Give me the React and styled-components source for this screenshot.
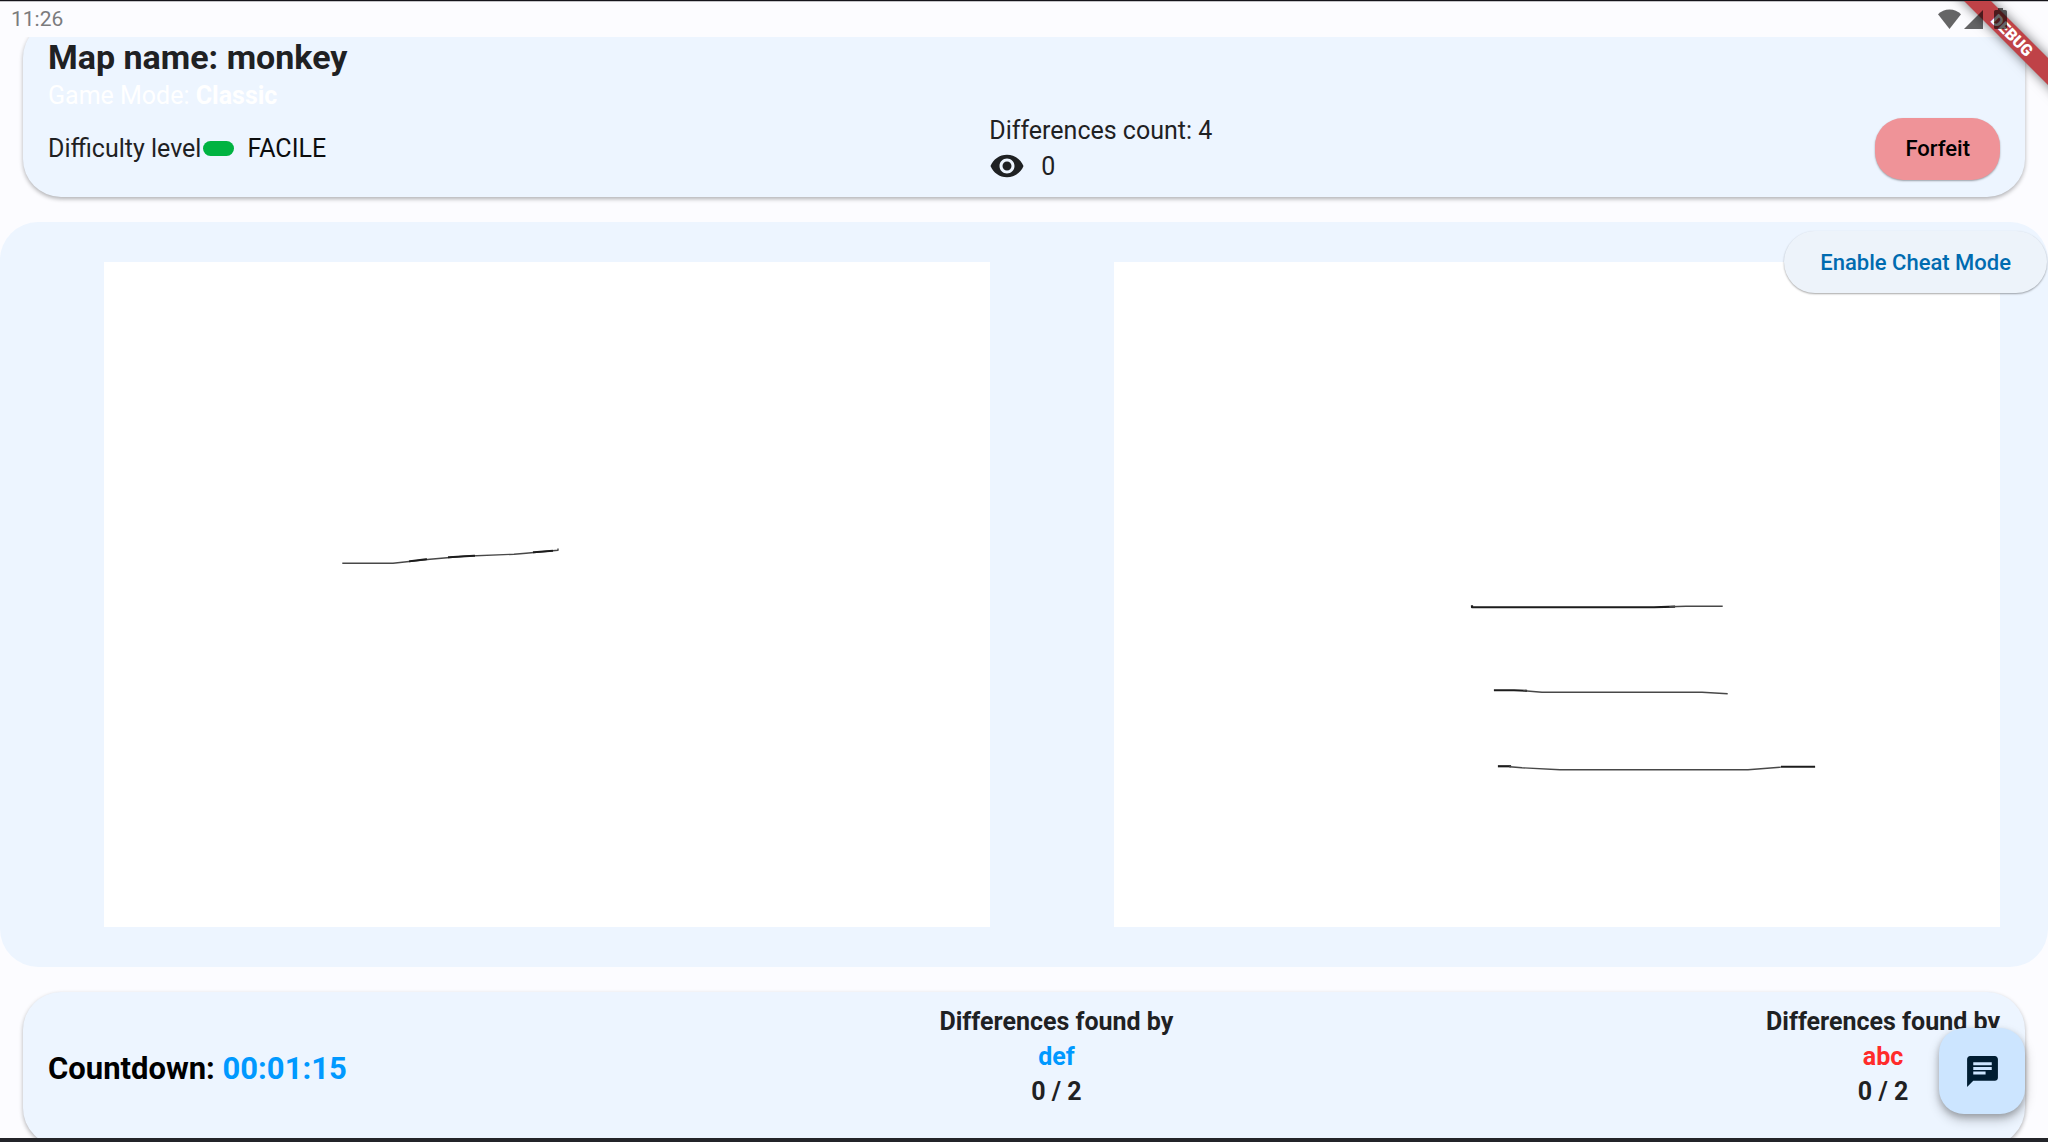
import React from "react";
import styled, { createGlobalStyle } from "styled-components";

const GlobalStyle = createGlobalStyle`
  *, *::before, *::after { box-sizing: border-box; }
  body {
    margin: 0;
    background: #fcfcff;
    color: #1f2123;
    font-family: Roboto, "Noto Sans", sans-serif;
    font-size: 25px;
  }
  h1, h2, p { margin: 0; }
`;

const Screen = styled.div`
  position: relative;
  display: flex;
  flex-direction: column;
  height: 100vh;
  overflow: hidden;
  border-top: 1px solid #15141a;
  border-bottom: 4px solid #232429;
  background: #fcfcff;
`;

const StatusBar = styled.header`
  flex: none;
  display: flex;
  align-items: center;
  justify-content: space-between;
  height: 36px;
  padding: 0 41px 2px 11px;
  border-top: 1px solid #c4c4c8;
`;

const Clock = styled.time`
  font-size: 21px;
  line-height: 34px;
  color: #7b7b7d;
`;

const StatusIcons = styled.div`
  position: relative;
  z-index: 3;
  display: flex;
  align-items: center;
  gap: 3px;
  color: rgba(0, 0, 0, 0.6);

  svg { display: block; }
  svg:last-child { margin-left: 8px; }
`;

const Ribbon = styled.div`
  position: absolute;
  z-index: 2;
  top: 25px;
  right: -64px;
  width: 200px;
  height: 19px;
  transform: rotate(45deg);
  background: #bf4247;
  box-shadow: 0 0 12px rgba(0, 0, 0, 0.55);
  color: #fff;
  font-size: 16px;
  font-weight: 900;
  line-height: 19px;
  text-align: center;
`;

const Content = styled.main`
  flex: 1;
  min-height: 0;
  overflow: hidden;
`;

const Card = styled.section`
  margin: 0 23px;
  border-radius: 38px;
  background: #edf5ff;
  box-shadow: 0 2px 4px rgba(0, 0, 0, 0.3);
`;

const InfoCard = styled(Card)`
  margin-top: -17px;
  padding: 16px 25px 13px;
`;

const Title = styled.h1`
  font-size: 34px;
  font-weight: 700;
  line-height: 43px;
`;

const Mode = styled.p`
  line-height: 34px;
  color: #fff;
`;

const Row = styled.div`
  display: flex;
  align-items: center;
  justify-content: space-between;
`;

const Difficulty = styled.p`
  display: flex;
  align-items: center;
  line-height: 36px;
`;

const Level = styled.span`
  color: #0c0d0e;
`;

const Pill = styled.span`
  width: 31px;
  height: 15px;
  margin: 0 13px 0 2px;
  border-radius: 8px;
  background: #00b341;
`;

const Counts = styled.div`
  line-height: 35px;
`;

const Views = styled.p`
  display: flex;
  align-items: center;
  gap: 16px;
`;

const Button = styled.button`
  height: 62px;
  border: 0;
  font-family: inherit;
  font-size: 22px;
  font-weight: 500;
  cursor: pointer;
  box-shadow: 0 1px 2px rgba(0, 0, 0, 0.35);
`;

const ForfeitButton = styled(Button)`
  padding: 0 30px;
  border-radius: 28px;
  background: #ef9398;
  color: #000;
`;

const CheatButton = styled(Button)`
  position: absolute;
  top: 9px;
  right: 1px;
  padding: 0 36px;
  border-radius: 31px;
  background: #edf3fa;
  color: #006bb0;
`;

const Board = styled.section`
  position: relative;
  display: flex;
  gap: 124px;
  margin: 25px 0;
  padding: 40px 48px 40px 104px;
  border-radius: 38px;
  background: #edf5ff;
`;

const Picture = styled.svg`
  display: block;
  flex: 1;
  min-width: 0;
  aspect-ratio: 4 / 3;
  background: #fff;
  fill: none;
  stroke-linejoin: round;
  stroke-linecap: square;
`;

const ScoreCard = styled(Card)`
  padding: 12px 25px;
`;

const ScoreRow = styled(Row)`
  min-height: 130px;
`;

const Countdown = styled.p`
  font-size: 31px;
  font-weight: 700;
  line-height: 36px;
  color: #000;
`;

const Time = styled.time`
  color: #09f;
`;

const Score = styled.div`
  align-self: flex-start;
  font-weight: 700;
  line-height: 35px;
  text-align: center;
`;

const Heading = styled.h2`
  font-size: inherit;
  font-weight: inherit;
`;

const Player = styled.p`
  color: ${(p) => p.$color};
`;

const ChatButton = styled.button`
  position: absolute;
  right: 23px;
  bottom: 24px;
  display: grid;
  place-items: center;
  width: 86px;
  height: 86px;
  padding: 0;
  border: 0;
  border-radius: 25px;
  background: #cce5ff;
  color: #001d32;
  cursor: pointer;
  box-shadow: 0 6px 12px rgba(0, 0, 0, 0.22), 0 3px 6px rgba(0, 0, 0, 0.2);
`;

function PlayerScore({ name, color, score }) {
  return (
    <Score>
      <Heading>Differences found by</Heading>
      <Player $color={color}>{name}</Player>
      <p>{score}</p>
    </Score>
  );
}

export default function App() {
  return (
    <>
      <GlobalStyle />
      <Screen>
        <StatusBar>
          <Clock>11:26</Clock>
          <StatusIcons>
            <svg width="23" height="20" viewBox="0 0 23 20" fill="currentColor" aria-hidden="true">
              <path d="M11.5 20 0 5.300C3 2 7 .5 11.500.5S20 2 23 5.300Z" />
            </svg>
            <svg width="19" height="20" viewBox="0 0 19 20" fill="currentColor" aria-hidden="true">
              <path d="M0 20 19 1V20Z" />
            </svg>
            <svg width="13" height="21" viewBox="0 0 13 21" fill="currentColor" aria-hidden="true">
              <path d="M4 0H9V2H11.500Q13 2 13 3.500V19.500Q13 21 11.500 21H1.500Q0 21 0 19.500V3.500Q0 2 1.500 2H4Z" />
            </svg>
          </StatusIcons>
        </StatusBar>
        <Content>
          <InfoCard>
            <Title>Map name: monkey</Title>
            <Mode>
              Game Mode: <b>Classic</b>
            </Mode>
            <Row>
              <Difficulty>
                Difficulty level
                <Pill />
                <Level>FACILE</Level>
              </Difficulty>
              <Counts>
                <p>Differences count: 4</p>
                <Views>
                  <svg width="36" height="36" viewBox="0 0 24 24" fill="currentColor" aria-hidden="true">
                    <path d="M12 4.500C7 4.500 2.730 7.610 1 12c1.730 4.390 6 7.500 11 7.500s9.270-3.110 11-7.500c-1.730-4.390-6-7.500-11-7.500zM12 17c-2.760 0-5-2.240-5-5s2.240-5 5-5 5 2.240 5 5-2.240 5-5 5zm0-8c-1.660 0-3 1.340-3 3s1.340 3 3 3 3-1.340 3-3-1.340-3-3-3z" />
                  </svg>
                  0
                </Views>
              </Counts>
              <ForfeitButton type="button">Forfeit</ForfeitButton>
            </Row>
          </InfoCard>
          <Board>
            <Picture viewBox="0 0 886 664" role="img" aria-label="Original picture">
              <path stroke="#484848" strokeWidth="1.400" d="M239 301H289L326 297L360 294L410 292L422 291L454 288V287" />
              <path stroke="#1c1c1c" strokeWidth="2" d="M306 299L322 297M345 295L370 293.500M430 290L448 288.500" />
            </Picture>
            <Picture viewBox="0 0 886 664" role="img" aria-label="Modified picture">
              <g stroke="#1c1c1c" strokeWidth="2.200">
                <path d="M358 344V345H540L560 344.500" />
                <path d="M381 428H400L412 428.500" />
                <path d="M385 504H396" />
                <path d="M668 504.500H700" />
              </g>
              <g stroke="#484848" strokeWidth="1.400">
                <path d="M556 344.500L572 344H608" />
                <path d="M410 428.500L428 430H588L613 431.500" />
                <path d="M396 504.500L408 505.500L446 507.500H634L666 505" />
              </g>
            </Picture>
            <CheatButton type="button">Enable Cheat Mode</CheatButton>
          </Board>
          <ScoreCard>
            <ScoreRow>
              <Countdown>
                Countdown: <Time>00:01:15</Time>
              </Countdown>
              <PlayerScore name="def" color="#0099ff" score="0 / 2" />
              <PlayerScore name="abc" color="#ff2b2b" score="0 / 2" />
            </ScoreRow>
          </ScoreCard>
        </Content>
        <ChatButton type="button" aria-label="Open chat">
          <svg width="37" height="37" viewBox="0 0 24 24" fill="currentColor" aria-hidden="true">
            <path d="M20 2H4c-1.100 0-1.990.9-1.990 2L2 22l4-4h14c1.100 0 2-.9 2-2V4c0-1.100-.9-2-2-2zM6 9h12v2H6V9zm8 5H6v-2h8v2zm4-6H6V6h12v2z" />
          </svg>
        </ChatButton>
        <Ribbon>DEBUG</Ribbon>
      </Screen>
    </>
  );
}
